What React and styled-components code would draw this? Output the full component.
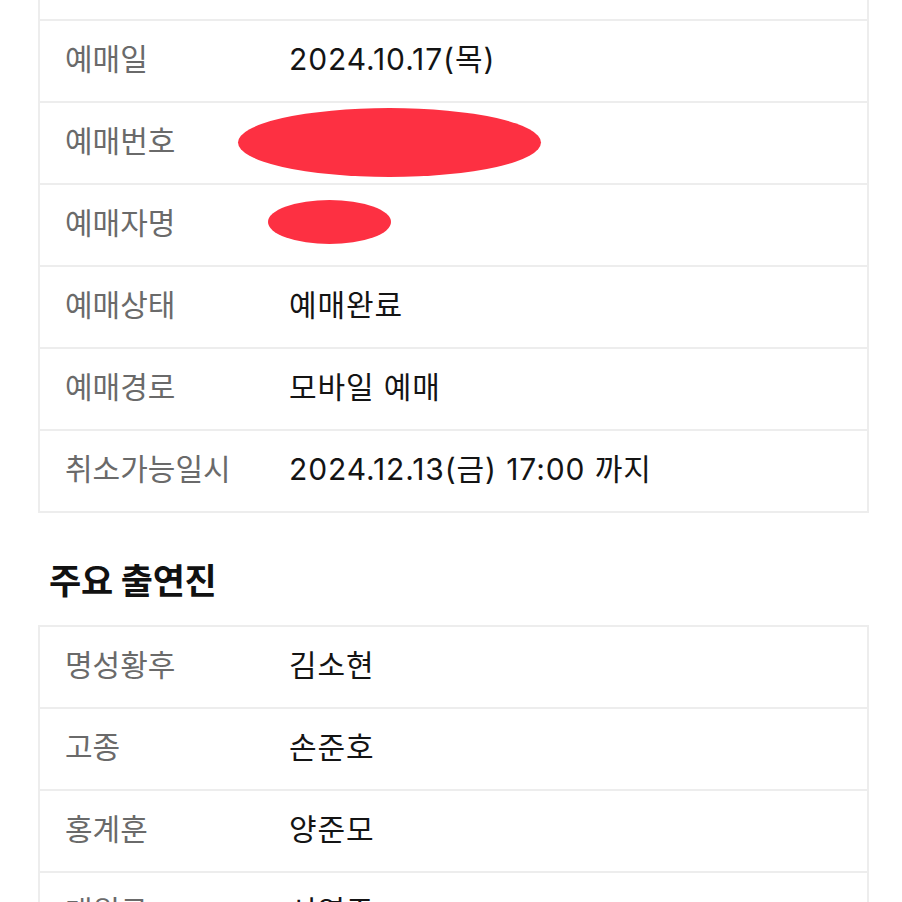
import styled, { createGlobalStyle } from "styled-components";

const GlobalStyle = createGlobalStyle`
  html, body {
    margin: 0;
    padding: 0;
    background: #ffffff;
  }
  body {
    font-family: "Inter", "Noto Sans CJK KR", sans-serif;
    -webkit-font-smoothing: antialiased;
  }
`;

const reservation = [
  { label: "관람일시", value: "" },
  { label: "예매일", value: "2024.10.17(목)" },
  { label: "예매번호", value: "", redact: { left: -51, width: 303, height: 69, shift: -1 } },
  { label: "예매자명", value: "", redact: { left: -21, width: 123, height: 44, shift: -3 } },
  { label: "예매상태", value: "예매완료" },
  { label: "예매경로", value: "모바일 예매" },
  { label: "취소가능일시", value: "2024.12.13(금) 17:00 까지" },
];

const cast = [
  { label: "명성황후", value: "김소현" },
  { label: "고종", value: "손준호" },
  { label: "홍계훈", value: "양준모" },
  { label: "대원군", value: "서영주" },
];

function App() {
  return (
    <>
      <GlobalStyle />
      <Page>
        <Table $top={-63}>
          {reservation.map((row) => (
            <Row key={row.label}>
              <Label>{row.label}</Label>
              <Value>
                {row.value}
                {row.redact && (
                  <Redaction
                    $left={row.redact.left}
                    $width={row.redact.width}
                    $height={row.redact.height}
                    $shift={row.redact.shift}
                  />
                )}
              </Value>
            </Row>
          ))}
        </Table>

        <Heading>주요 출연진</Heading>

        <Table>
          {cast.map((row) => (
            <Row key={row.label}>
              <Label>{row.label}</Label>
              <Value>{row.value}</Value>
            </Row>
          ))}
        </Table>
      </Page>
    </>
  );
}

const Page = styled.div`
  width: 902px;
  height: 902px;
  overflow: hidden;
  padding-left: 38px;
  box-sizing: border-box;
`;

const Table = styled.div`
  width: 831px;
  box-sizing: border-box;
  border: 2px solid #ededed;
  margin-top: ${({ $top }) => ($top ? `${$top}px` : "0")};
  display: flex;
  flex-direction: column;
`;

const Row = styled.div`
  display: grid;
  grid-template-columns: 249px 1fr;
  align-items: center;
  height: 80px;
  & + & {
    border-top: 2px solid #ededed;
  }
`;

const Label = styled.div`
  padding-left: 25px;
  padding-bottom: 9px;
  font-size: 30px;
  color: #6a6a6a;
  white-space: nowrap;
`;

const Value = styled.div`
  position: relative;
  height: 100%;
  display: flex;
  align-items: center;
  padding-bottom: 9px;
  box-sizing: border-box;
  font-size: 30px;
  color: #141414;
  letter-spacing: 0.9px;
  white-space: nowrap;
`;

const Redaction = styled.span`
  position: absolute;
  left: ${({ $left }) => $left}px;
  top: 50%;
  width: ${({ $width }) => $width}px;
  height: ${({ $height }) => $height}px;
  margin-top: ${({ $height, $shift }) => -$height / 2 + $shift}px;
  border-radius: 50%;
  background: #fd3042;
`;

const Heading = styled.h2`
  margin: 46px 0 22px 11px;
  font-size: 35px;
  line-height: 44px;
  font-weight: 700;
  color: #111111;
  letter-spacing: -0.3px;
`;

export default App;
